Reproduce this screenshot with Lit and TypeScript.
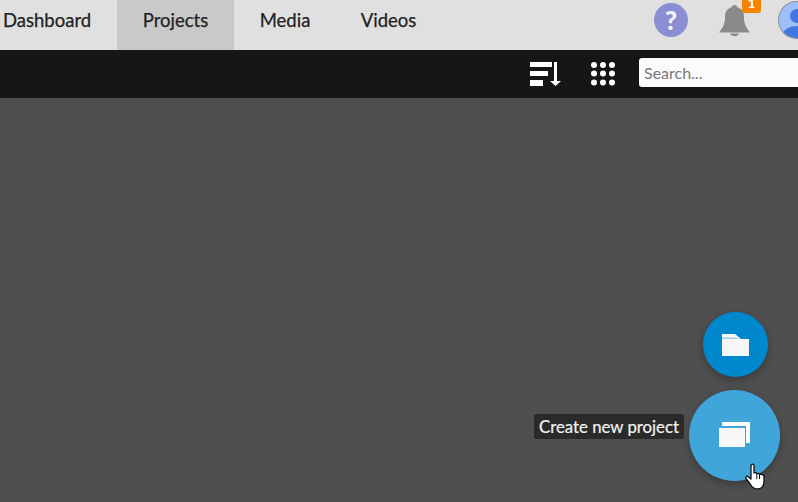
import { LitElement, html, css, svg } from "lit";
import { customElement } from "lit/decorators.js";

@customElement("app-root")
export class AppRoot extends LitElement {
  static styles = css`
    :host { display: block; width: 798px; height: 502px; overflow: hidden; position: relative; background: #4f4f4f; font-family: Lato, "Liberation Sans", sans-serif; }
    .top { height: 50px; background: #e0e0e0; display: flex; align-items: stretch; }
    .tab { display: flex; align-items: center; justify-content: center; font-size: 18.5px; color: #222; padding-bottom: 10px; box-sizing: border-box; -webkit-text-stroke: 0.25px #222; }
    .t0 { width: 117px; justify-content: flex-start; padding-left: 3px; }
    .t1 { width: 117px; background: #c9c9c9; }
    .t2 { width: 102px; }
    .t3 { width: 105px; }
    .right { margin-left: auto; position: relative; width: 144px; flex: none; }
    .help { position: absolute; left: 0; top: 3px; width: 34px; height: 34px; border-radius: 50%; background: #8a8ed3; color: #f5f5f5; font-weight: 900; font-size: 26px; display: flex; align-items: center; justify-content: center; }
    .bell { position: absolute; left: 65px; top: 3px; width: 32px; height: 34px; }
    .badge { position: absolute; left: 88px; top: -6px; width: 19px; height: 19px; border-radius: 3px; background: #f58400; color: #fff; font-size: 13px; font-weight: 900; text-align: center; line-height: 19px; }
    .avatar { position: absolute; left: 124px; top: 1px; width: 38px; height: 38px; }
    .sub { height: 48px; background: #161616; display: flex; align-items: center; justify-content: flex-end; overflow: hidden; }
    .sort { width: 31px; height: 24px; flex: none; }
    .grid { width: 24px; height: 24px; margin-left: 30px; flex: none; }
    .search { width: 190px; height: 29px; margin-left: 24px; margin-right: -31px; margin-top: -3px; flex: none; background: #fbfbfb; border-radius: 3px; color: #777; font-size: 16px; display: flex; align-items: center; padding-left: 5px; box-sizing: border-box; }
    .fab { position: absolute; border-radius: 50%; display: flex; align-items: center; justify-content: center; box-shadow: 0 3px 8px rgba(0,0,0,.28); }
    .folder { left: 703px; top: 312px; width: 65px; height: 65px; background: #0088cc; }
    .create { left: 689px; top: 390px; width: 91px; height: 91px; background: #40a5d9; }
    .create svg { margin-top: -2px; }
    .tip { position: absolute; left: 534px; top: 414px; width: 150px; height: 25px; box-sizing: border-box; border-radius: 2px; background: #2a2a2a; color: #f2f2f2; font-size: 16.8px; line-height: 25px; text-align: center; white-space: nowrap; -webkit-text-stroke: 0.2px #f2f2f2; }
    .cursor { position: absolute; left: 745px; top: 463px; width: 21px; height: 27px; }
  `;

  render() {
    return html`
      <div class="top">
        <div class="tab t0">Dashboard</div>
        <div class="tab t1">Projects</div>
        <div class="tab t2">Media</div>
        <div class="tab t3">Videos</div>
        <div class="right">
          <div class="help">?</div>
          <svg class="bell" viewBox="0 0 32 34"><path fill="#8a8a8a" d="M15.500 2c1.600 0 2.600 1 2.800 2.200C23 5.500 25 9 25 14c0 6 1.500 10 6 15.500H0C4.500 24 6 20 6 14c0-5 2-8.500 6.700-9.800C12.900 3 13.900 2 15.500 2z"/><path fill="#8a8a8a" d="M11 30.500h9c-.6 1.800-2.400 2.800-4.500 2.800S11.600 32.300 11 30.500z"/></svg>
          <div class="badge">1</div>
          <svg class="avatar" viewBox="0 0 38 38"><defs><clipPath id="av"><circle cx="19" cy="19" r="18"/></clipPath></defs><circle cx="19" cy="19" r="19" fill="#8b8f96"/><g clip-path="url(#av)"><rect width="38" height="38" fill="#9dc0fa"/><circle cx="19" cy="15" r="7" fill="#4278e0"/><ellipse cx="19" cy="35" rx="15" ry="10" fill="#4278e0"/></g></svg>
        </div>
      </div>
      <div class="sub">
        <svg class="sort" viewBox="0 0 31 24"><g fill="#fff"><rect x="0" y="0" width="22" height="5"/><rect x="0" y="9" width="18" height="5"/><rect x="0" y="18" width="13" height="6"/><rect x="24" y="0" width="3" height="20"/><path d="M20 19h11l-5.500 5z"/></g></svg>
        <svg class="grid" viewBox="0 0 24 24"><g fill="#fff">${[3, 11.5, 20.5].flatMap((y) => [3, 12, 21].map((x) => svg`<circle cx=${x} cy=${y} r="3"/>`))}</g></svg>
        <div class="search">Search...</div>
      </div>
      <div class="fab folder">
        <svg width="27" height="22" viewBox="0 0 27 22"><path fill="#f7f7f7" d="M0 0h13l6 5h8v17H0z"/><path fill="#9fd0ea" d="M0 3.500h14.500l2 1.500H0z"/></svg>
      </div>
      <div class="fab create">
        <svg width="31" height="25" viewBox="0 0 31 25"><path fill="#fff" d="M3 0h28v21h-4V4H3z"/><rect x="0" y="6" width="26" height="19" fill="#f7f7f7"/></svg>
      </div>
      <div class="tip">Create new project</div>
      <svg class="cursor" viewBox="0 0 21 27"><path fill="#fff" stroke="#111" stroke-width="1.300" stroke-linejoin="round" d="M6 2.500c0-1.800 3-1.800 3 0V10c1.500-.6 2.400-.2 2.800.6 1.400-.5 2.300 0 2.700.8 1.500-.4 4.500.2 4.500 2V19c0 3.500-2.300 7-6.500 7-3.600 0-5.500-1.700-7-4.500L1 15.500c-1-1.600 1-3 2.400-1.600L6 16z"/><path stroke="#111" stroke-width="1" d="M11.800 11v5M14.500 12v4"/></svg>
    `;
  }
}
